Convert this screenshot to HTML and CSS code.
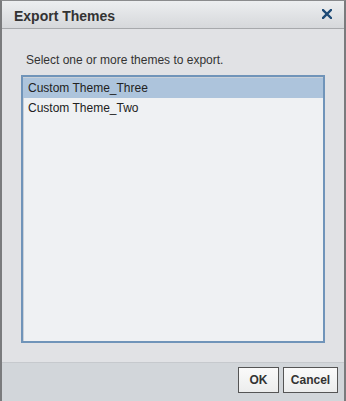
FILE: index.html
```html
<!DOCTYPE html>
<html>
<head>
<meta charset="utf-8">
<link rel="stylesheet" href="styles.css">
</head>
<body>
<div class="dialog">
  <div class="titlebar">
    <span class="title">Export Themes</span>
    <svg class="close" width="10" height="10" viewBox="0 0 10 10"><path d="M1 1 L9 9 M9 1 L1 9" stroke="#1d4a76" stroke-width="2.4" stroke-linecap="square"/></svg>
  </div>
  <div class="content">
    <p class="prompt">Select one or more themes to export.</p>
    <div class="listbox">
      <div class="item selected">Custom Theme_Three</div>
      <div class="item">Custom Theme_Two</div>
    </div>
  </div>
  <div class="footer">
    <button class="btn ok">OK</button>
    <button class="btn cancel">Cancel</button>
  </div>
</div>
</body>
</html>
```

FILE: styles.css
```css
html, body {
  margin: 0;
  padding: 0;
  width: 346px;
  height: 401px;
  overflow: hidden;
  background: #e1e2e5;
}
.dialog {
  box-sizing: border-box;
  width: 346px;
  height: 401px;
  border-left: 2px solid #7a7b7d;
  border-right: 2px solid #7a7b7d;
  border-top: 1px solid #8a8b8d;
  display: flex;
  flex-direction: column;
  font-family: "Liberation Sans", Arial, sans-serif;
  color: #333;
}
.titlebar {
  height: 27px;
  flex: none;
  border-bottom: 1px solid #a7a9ac;
  background: linear-gradient(#eceef0, #d6d8db);
  display: flex;
  align-items: center;
  justify-content: space-between;
  padding: 0 12px 0 12px;
}
.title {
  font-weight: bold;
  font-size: 14px;
  color: #333;
  padding-top: 3px;
}
.close {
  display: block;
  margin-top: -2px;
}
.content {
  flex: 1;
  background: #e1e2e5;
  padding: 0 19px 0 19px;
  border-bottom: 1px solid #c6c9cd;
}
.prompt {
  margin: 24px 0 0 5px;
  font-size: 12px;
  line-height: 14px;
}
.listbox {
  margin-top: 8px;
  height: 268px;
  box-sizing: border-box;
  border: 2px solid #7094b9;
  background: #eff1f3;
  box-shadow: inset 1px 1px 0 #c9d0d8;
  padding-top: 1px;
}
.item {
  height: 20px;
  line-height: 20px;
  font-size: 12px;
  padding-left: 5px;
  color: #222;
}
.item.selected {
  background: #adc4dc;
}
.footer {
  box-sizing: border-box;
  height: 38px;
  flex: none;
  background: #d2d6da;
  display: flex;
  justify-content: flex-end;
  align-items: flex-start;
  gap: 4px;
  padding: 4px 6px 0 0;
}
.btn {
  height: 26px;
  box-sizing: border-box;
  border: 1px solid #555;
  border-radius: 0;
  background: linear-gradient(#fafafa, #eceded);
  font-family: "Liberation Sans", Arial, sans-serif;
  font-weight: bold;
  font-size: 12px;
  color: #333;
  padding: 0;
  margin: 0;
}
.ok { width: 41px; }
.cancel { width: 55px; }
```
